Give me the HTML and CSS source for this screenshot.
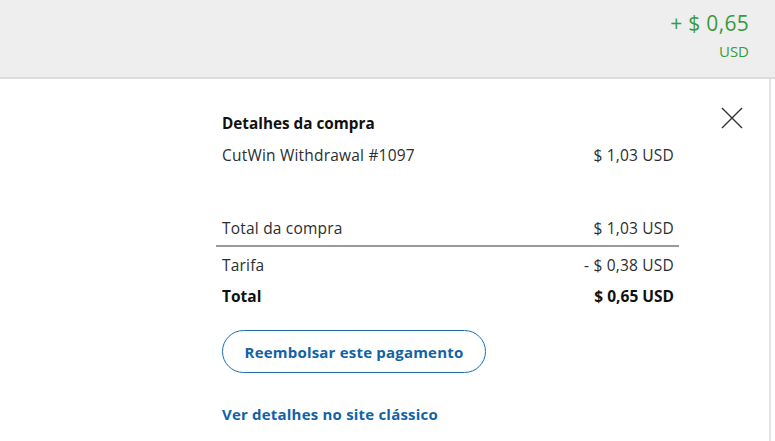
FILE: index.html
```html
<!DOCTYPE html>
<html lang="pt">
<head>
<meta charset="utf-8">
<link rel="stylesheet" href="styles.css">
</head>
<body>
<header class="topbar">
  <div class="amount">
    <div class="amount-value">+ $ 0,65</div>
    <div class="amount-cur">USD</div>
  </div>
</header>
<main class="panel">
  <button class="close" aria-label="Fechar">
    <svg width="24" height="24" viewBox="0 0 24 24"><path d="M2 2 L22 22 M22 2 L2 22" stroke="#333" stroke-width="1.4" fill="none"/></svg>
  </button>
  <section class="details">
    <h2 class="title">Detalhes da compra</h2>
    <div class="row"><span>CutWin Withdrawal #1097</span><span>$ 1,03 USD</span></div>
    <div class="row subtotal"><span>Total da compra</span><span>$ 1,03 USD</span></div>
    <div class="row fee"><span>Tarifa</span><span>- $ 0,38 USD</span></div>
    <div class="row total"><span>Total</span><span>$ 0,65 USD</span></div>
    <button class="refund">Reembolsar este pagamento</button>
    <a class="classic" href="#">Ver detalhes no site clássico</a>
  </section>
</main>
</body>
</html>
```
FILE: styles.css
```css
* { box-sizing: border-box; }
html, body { margin: 0; padding: 0; }
body {
  width: 775px;
  height: 441px;
  overflow: hidden;
  background: #fff;
  font-family: "Open Sans", "Noto Sans", sans-serif;
  color: #2c2e2f;
}
.topbar {
  height: 79px;
  background: #eeeeee;
  border-bottom: 2px solid #dcdcdc;
  display: flex;
  justify-content: flex-end;
  padding: 8px 26px 0 0;
}
.amount { text-align: right; color: #3a9a3f; }
.amount-value { font-size: 21px; line-height: 30px; letter-spacing: 0.3px; }
.amount-cur { font-size: 15px; line-height: 22px; margin-top: 2px; }
.panel {
  position: relative;
  height: 362px;
  margin-right: 4px;
  border-right: 2px solid #e4e4e4;
  padding: 34px 0 0 216px;
}
.close {
  position: absolute;
  top: 27px;
  right: 25px;
  background: none;
  border: 0;
  padding: 0;
  width: 24px;
  height: 24px;
}
.close svg { display: block; }
.details { width: 463px; }
.title {
  margin: 0 0 12px 6px;
  font-size: 15.3px;
  font-weight: 700;
  line-height: 20px;
  color: #111;
}
.row {
  display: flex;
  justify-content: space-between;
  font-size: 15.5px;
  line-height: 20px;
  letter-spacing: 0.2px;
  padding: 0 5px 0 6px;
  color: #2c2e2f;
}
.subtotal {
  margin-top: 53px;
  padding-bottom: 7px;
  border-bottom: 2px solid #9a9a9a;
}
.fee { margin-top: 8px; }
.total { margin-top: 11px; font-weight: 700; color: #111; letter-spacing: 0; }
.refund {
  display: block;
  margin: 24px 0 0 6px;
  width: 264px;
  height: 43px;
  border: 1px solid #1d6fae;
  border-radius: 22px;
  background: #fff;
  color: #1163a6;
  font-family: inherit;
  font-size: 15px;
  font-weight: 700;
  letter-spacing: 0.2px;
}
.classic {
  display: block;
  margin: 31px 0 0 6px;
  color: #1163a6;
  font-size: 15px;
  font-weight: 700;
  letter-spacing: 0.2px;
  text-decoration: none;
  line-height: 20px;
}
```
